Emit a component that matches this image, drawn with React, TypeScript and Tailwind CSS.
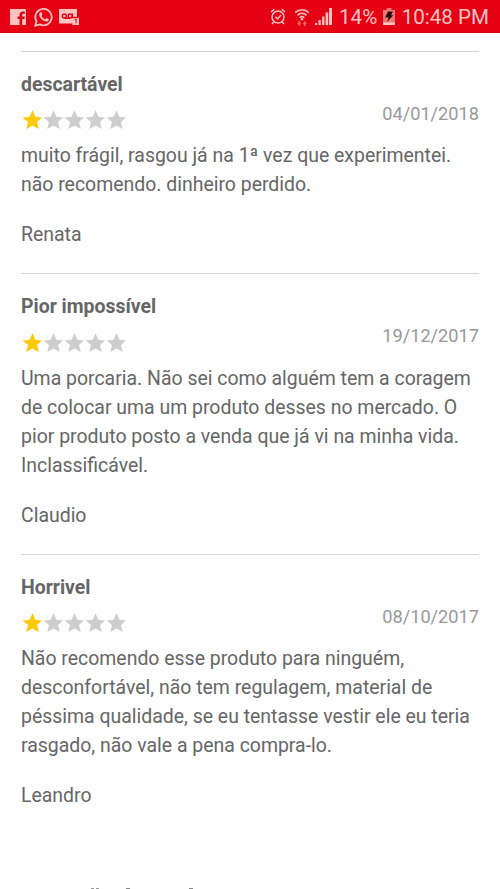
const reviews = [
  {
    title: 'descartável',
    date: '04/01/2018',
    lines: ['muito frágil, rasgou já na 1ª vez que experimentei.', 'não recomendo. dinheiro perdido.'],
    author: 'Renata',
  },
  {
    title: 'Pior impossível',
    date: '19/12/2017',
    lines: [
      'Uma porcaria. Não sei como alguém tem a coragem',
      'de colocar uma um produto desses no mercado. O',
      'pior produto posto a venda que já vi na minha vida.',
      'Inclassificável.',
    ],
    author: 'Claudio',
  },
  {
    title: 'Horrivel',
    date: '08/10/2017',
    lines: [
      'Não recomendo esse produto para ninguém,',
      'desconfortável, não tem regulagem, material de',
      'péssima qualidade, se eu tentasse vestir ele eu teria',
      'rasgado, não vale a pena compra-lo.',
    ],
    author: 'Leandro',
  },
];

function Star({ filled }: { filled: boolean }) {
  return (
    <svg viewBox="0 0 21 20" className={`h-5 w-[21px] ${filled ? 'text-[#fbcb09]' : 'text-[#cecece]'}`}>
      <path
        fill="currentColor"
        d="M11.5 .2 14.4 6.8 21 7.4 16 12.1 17.7 19 11.5 15.4 5.3 19 7 12.1 1.6 7.4 8.6 6.8Z"
      />
    </svg>
  );
}

function StatusBar() {
  return (
    <header className="flex h-[33px] shrink-0 items-center justify-between bg-[#e60014] pr-[11px] pl-[10px] text-[#ffc4c0]">
      <div className="flex items-center gap-[8px]">
        <svg viewBox="0 0 16 16" className="size-4">
          <path
            fill="currentColor"
            fillRule="evenodd"
            d="M0 0H16V16H12.2V10H14.4L14.8 7.5H12.2V6.2C12.2 5.3 12.6 4.8 13.6 4.8H14.8V2.5H13C10.7 2.5 9.5 3.9 9.5 6V7.5H7.5V10H9.5V16H0Z"
          />
        </svg>
        <svg viewBox="0 0 20 20" className="size-5">
          <path
            fill="none"
            stroke="currentColor"
            strokeWidth="1.8"
            d="M1.3 18.7 2.5 14.3A8.2 8.2 0 1 1 5.8 17.4Z"
          />
          <path
            fill="currentColor"
            d="M7.3 5.1 8.4 7.5 7.5 9C8.4 10.7 9.6 11.7 11.2 12.4L12.5 11 14.9 12.2C14.9 13.7 13.7 14.6 12.4 14.5 8.7 14.1 5.5 10.8 5.2 7.8 5.1 6.5 5.9 5.1 7.3 5.1Z"
          />
        </svg>
        <svg viewBox="0 0 20 16" className="-ml-[3.5px] h-4 w-5">
          <path fill="currentColor" d="M0 0H18V8H20V16H13.5V14.5H0Z" />
          <g fill="none" stroke="#e60014" strokeWidth="1.4">
            <circle cx="5.3" cy="7" r="2" />
            <circle cx="11.2" cy="7" r="2" />
            <path d="M5.3 9.3H11.2M13.4 4.5V8.5H19.5" />
          </g>
          <path fill="none" stroke="#e60014" d="M15.8 11 17 10.2V14.3" />
        </svg>
      </div>
      <div className="flex items-center">
        <svg viewBox="0 0 16 17" className="mr-[8px] h-[17px] w-4" fill="none" stroke="currentColor" strokeWidth="1.5">
          <circle cx="8" cy="9" r="6" />
          <path d="M1 4 4.2 1.3M15 4 11.8 1.3M3.8 14 2 16M12.2 14 14 16M5.4 8.8 7.5 11 11 7" />
        </svg>
        <svg viewBox="0 0 16 18" className="mr-[5px] h-[18px] w-4">
          <g fill="none" stroke="currentColor" strokeWidth="1.6">
            <path d="M1.2 4.6C5 .8 11 .8 14.8 4.6M3.5 7.3C6.2 4.7 9.8 4.7 12.5 7.3M5.7 9.8C7 8.5 9 8.5 10.3 9.8" />
          </g>
          <circle cx="8" cy="11.3" r="1.3" fill="currentColor" />
          <path fill="#fa655f" d="M4.3 13H6.3V15.3H7.5L5.3 18 3.1 15.3H4.3ZM9.7 18V15.7H8.5L10.7 13 12.9 15.7H11.7V18Z" />
        </svg>
        <svg viewBox="0 0 17 17" className="mr-[7px] h-[17px] w-[17px]" fill="currentColor">
          <path d="M0 15H2.3V17H0ZM3.5 12H5.8V17H3.5ZM7.1 8.5H9.4V17H7.1ZM10.6 4.5H13.2V17H10.6ZM14.1 0H17V17H14.1Z" />
        </svg>
        <span className="w-[39px] pt-[2px] text-[20.6px] leading-none whitespace-nowrap">14%</span>
        <svg viewBox="0 0 12 17" className="mr-[6px] ml-[5px] h-[17px] w-3">
          <path fill="#ef7770" d="M3.5 0H8.5V2H12V17H0V2H3.5Z" />
          <path fill="currentColor" d="M0 14.5H12V17H0Z" />
          <path fill="#27100c" d="M5 3.5H10L8 7.3H10.3L4.1 14 5.6 9.6H2.2Z" />
        </svg>
        <span className="flex w-[88px] justify-end pt-[2px] text-[20.6px] leading-none whitespace-nowrap">10:48 PM</span>
      </div>
    </header>
  );
}

export default function App() {
  return (
    <div className="flex h-[889px] w-[500px] flex-col overflow-hidden bg-[#fefefe] font-['Roboto',sans-serif] text-[#666]">
      <StatusBar />
      <main className="flex grow flex-col px-[21px] pt-[17.8px]">
        {reviews.map((review) => (
          <article key={review.title} className="border-t border-[#d5d7d6] pt-[18.2px] pb-[23.55px]">
            <h2 className="text-[19.44px] leading-[29.17px] font-bold">{review.title}</h2>
            <div className="flex h-[42.15px] justify-between">
              <div className="flex pt-[11.3px]">
                {[0, 1, 2, 3, 4].map((star) => (
                  <Star key={star} filled={star === 0} />
                ))}
              </div>
              <time className="text-[18.2px] leading-[29px] text-[#999]">{review.date}</time>
            </div>
            <p className="text-[19.44px] leading-[29.12px] whitespace-nowrap">
              {review.lines.map((line) => (
                <span key={line} className="block">
                  {line}
                </span>
              ))}
            </p>
            <p className="mt-[20.8px] text-[19.44px] leading-[29.17px]">{review.author}</p>
          </article>
        ))}
      </main>
      {/* Tips of the next heading's accents, cut off by the bottom edge */}
      <div className="flex h-px shrink-0 pl-[91px]">
        <span className="w-[3px] bg-[#999]" />
        <span className="ml-[2px] w-[3px] bg-[#999]" />
        <span className="ml-[27px] w-[4px] bg-[#888]" />
        <span className="ml-[59px] w-[4px] bg-[#888]" />
      </div>
    </div>
  );
}
